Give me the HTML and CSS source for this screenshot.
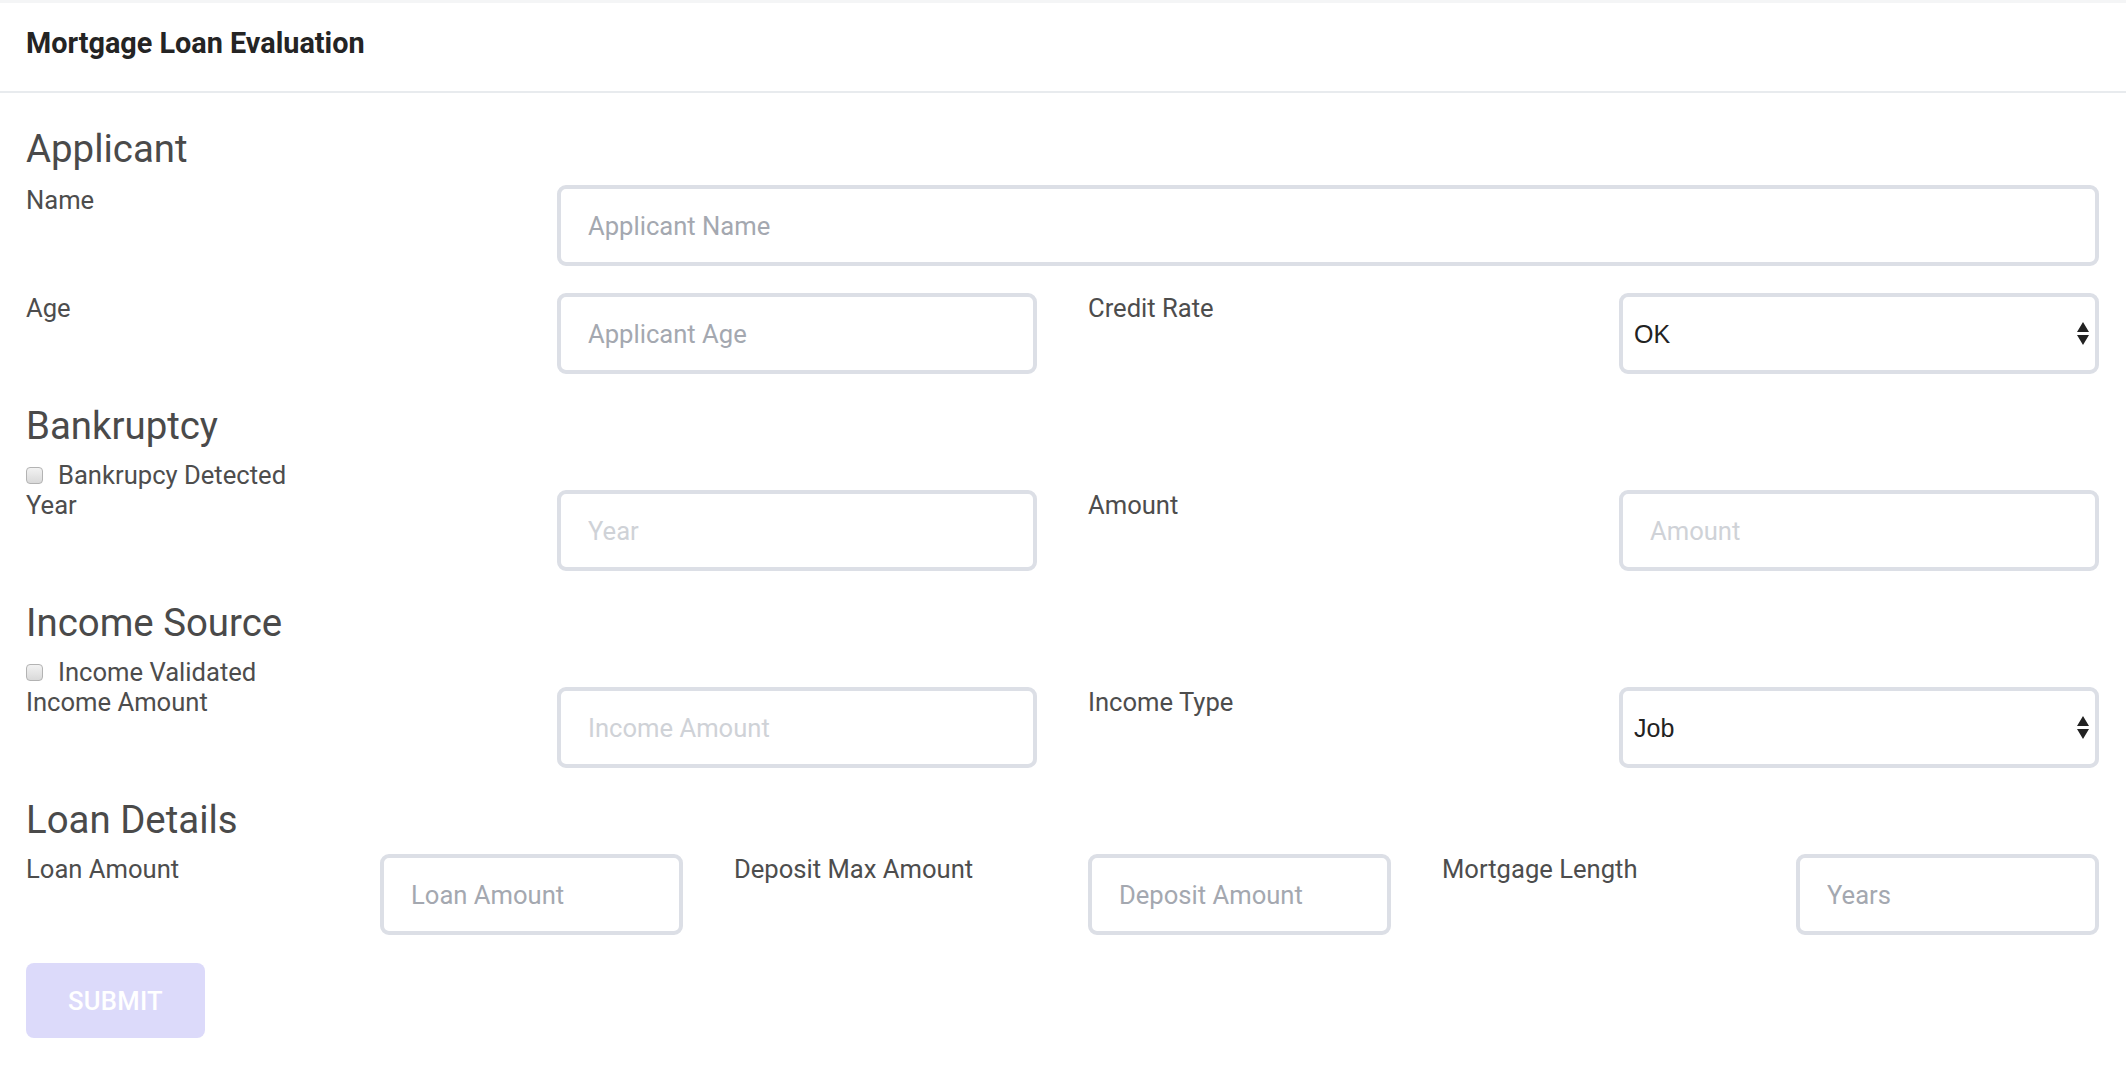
FILE: index.html
```html
<!DOCTYPE html>
<html lang="en">
<head>
<meta charset="utf-8">
<title>Mortgage Loan Evaluation</title>
<link rel="stylesheet" href="styles.css">
</head>
<body>
<header class="topbar">
  <h1 class="title">Mortgage Loan Evaluation</h1>
</header>
<main class="form">
  <section class="section">
    <h3 class="section-title">Applicant</h3>
    <div class="grid4">
      <label class="lbl">Name</label>
      <div class="span3"><input class="inp" type="text" placeholder="Applicant Name"></div>
      <label class="lbl">Age</label>
      <div><input class="inp" type="text" placeholder="Applicant Age"></div>
      <label class="lbl">Credit Rate</label>
      <div class="select-wrap">
        <select class="sel"><option>OK</option><option>Good</option><option>Bad</option></select>
        <svg class="arrows" width="12" height="23" viewBox="0 0 12 23"><path d="M6 0 L12 10 H0 Z M6 23 L12 13 H0 Z" fill="#222"/></svg>
      </div>
    </div>
  </section>

  <section class="section">
    <h3 class="section-title">Bankruptcy</h3>
    <label class="check"><input class="cb" type="checkbox"><span>Bankrupcy Detected</span></label>
    <div class="grid4">
      <label class="lbl">Year</label>
      <div><input class="inp" type="text" placeholder="Year" disabled></div>
      <label class="lbl">Amount</label>
      <div><input class="inp" type="text" placeholder="Amount" disabled></div>
    </div>
  </section>

  <section class="section">
    <h3 class="section-title">Income Source</h3>
    <label class="check"><input class="cb" type="checkbox"><span>Income Validated</span></label>
    <div class="grid4">
      <label class="lbl">Income Amount</label>
      <div><input class="inp" type="text" placeholder="Income Amount" disabled></div>
      <label class="lbl">Income Type</label>
      <div class="select-wrap">
        <select class="sel"><option>Job</option><option>Asset</option></select>
        <svg class="arrows" width="12" height="23" viewBox="0 0 12 23"><path d="M6 0 L12 10 H0 Z M6 23 L12 13 H0 Z" fill="#222"/></svg>
      </div>
    </div>
  </section>

  <section class="section">
    <h3 class="section-title">Loan Details</h3>
    <div class="grid6">
      <label class="lbl">Loan Amount</label>
      <div><input class="inp" type="text" placeholder="Loan Amount"></div>
      <label class="lbl">Deposit Max Amount</label>
      <div><input class="inp" type="text" placeholder="Deposit Amount"></div>
      <label class="lbl">Mortgage Length</label>
      <div><input class="inp" type="text" placeholder="Years"></div>
    </div>
  </section>

  <div class="actions">
    <button class="submit" type="button" disabled>SUBMIT</button>
  </div>
</main>
</body>
</html>
```

FILE: styles.css
```css
* { box-sizing: border-box; }

html, body {
  margin: 0;
  padding: 0;
  background: #ffffff;
  font-family: Roboto, "Liberation Sans", Arial, sans-serif;
  color: #4d4d4d;
}

.topbar {
  border-top: 3px solid #f4f5f6;
  border-bottom: 2px solid #e8ebee;
  padding: 23px 26px 31px 26px;
}

.title {
  margin: 0;
  font-size: 28.8px;
  line-height: 34px;
  font-weight: 700;
  color: #242424;
}

.form {
  padding: 0 27px 0 26px;
}

.section-title {
  margin: 31px 0 13px 0;
  font-size: 38.4px;
  line-height: 42px;
  font-weight: 400;
  color: #4a4a4a;
}

.section:first-child .section-title {
  margin-top: 35px;
  margin-bottom: 15px;
}

.grid4 {
  display: grid;
  grid-template-columns: repeat(4, 1fr);
  column-gap: 51px;
  row-gap: 27px;
}

.grid6 {
  display: grid;
  grid-template-columns: repeat(6, 1fr);
  column-gap: 51px;
  row-gap: 27px;
}

.span3 {
  grid-column: span 3;
}

.lbl {
  font-size: 25.6px;
  line-height: 30px;
  color: #4d4d4d;
}

.inp {
  display: block;
  width: 100%;
  height: 81px;
  margin: 0;
  padding: 0 27px;
  border: 4px solid #dcdfe6;
  border-radius: 9px;
  background: #ffffff;
  font-family: Roboto, "Liberation Sans", Arial, sans-serif;
  font-size: 25.6px;
  color: #333333;
  outline: none;
}

.inp::placeholder {
  color: #a4a8b0;
}

.inp:disabled {
  background: #ffffff;
}

.inp:disabled::placeholder {
  color: #cfd2d7;
}

.select-wrap {
  position: relative;
}

.sel {
  display: block;
  width: 100%;
  height: 81px;
  margin: 0;
  padding: 0 11px;
  border: 4px solid #dcdfe6;
  border-radius: 9px;
  background: #ffffff;
  -webkit-appearance: none;
  appearance: none;
  font-family: "Liberation Sans", Arial, sans-serif;
  font-size: 25px;
  color: #222222;
  outline: none;
}

.arrows {
  position: absolute;
  right: 10px;
  top: 29px;
  pointer-events: none;
}

.check {
  display: flex;
  align-items: center;
  height: 30px;
  font-size: 25.6px;
  color: #4d4d4d;
}

.cb {
  -webkit-appearance: none;
  appearance: none;
  flex: none;
  width: 17px;
  height: 17px;
  margin: 0 15px 0 0;
  border: 1px solid #b3b3b3;
  border-radius: 4px;
  background: linear-gradient(#f2f2f2, #d9d9d9);
}

.actions {
  margin-top: 28px;
}

.submit {
  width: 179px;
  height: 75px;
  border: none;
  border-radius: 8px;
  background: #dcdafa;
  color: #ffffff;
  font-family: Roboto, "Liberation Sans", Arial, sans-serif;
  font-size: 25.6px;
  font-weight: 500;
  letter-spacing: 0.3px;
  padding: 0;
}
```
